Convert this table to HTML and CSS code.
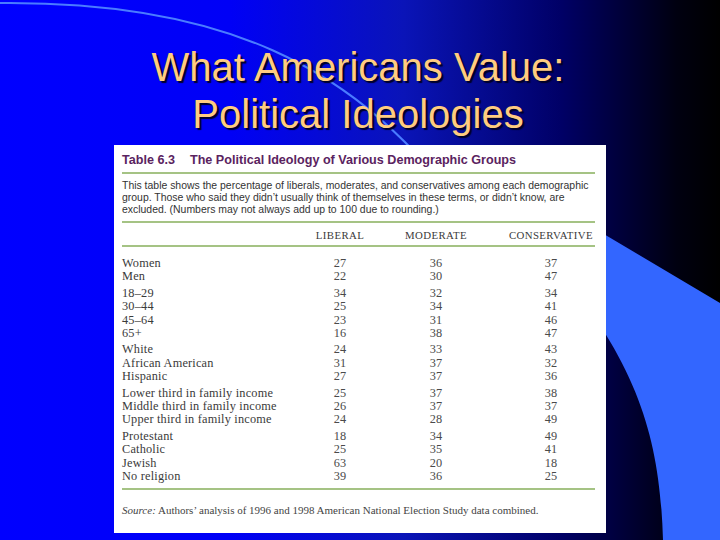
FILE: index.html
```html
<!DOCTYPE html>
<html>
<head>
<meta charset="utf-8">
<link rel="stylesheet" href="styles.css">
</head>
<body>
<div class="slide">
  <svg class="deco" width="720" height="540" viewBox="0 0 720 540" aria-hidden="true">
    <path d="M0 3 C210 1 360 58 470 222" fill="none" stroke="#4a7cff" stroke-width="2"/>
    <path d="M560 208 L720 303 L720 540 L663 540 C660 440 640 370 560 270 Z" fill="#3366ff"/>
  </svg>
  <h1 class="title">What Americans Value:<br>Political Ideologies</h1>
  <div class="card">
    <div class="caption"><span class="num">Table 6.3</span><span>The Political Ideology of Various Demographic Groups</span></div>
    <div class="rule"></div>
    <p class="intro">This table shows the percentage of liberals, moderates, and conservatives among each demographic group. Those who said they didn’t usually think of themselves in these terms, or didn’t know, are excluded. (Numbers may not always add up to 100 due to rounding.)</p>
    <div class="rule"></div>
    <div class="row head"><span></span><span>LIBERAL</span><span>MODERATE</span><span>CONSERVATIVE</span></div>
    <div class="rule"></div>
    <div class="body">
      <div class="group">
        <div class="row"><span>Women</span><span>27</span><span>36</span><span>37</span></div>
        <div class="row"><span>Men</span><span>22</span><span>30</span><span>47</span></div>
      </div>
      <div class="group">
        <div class="row"><span>18–29</span><span>34</span><span>32</span><span>34</span></div>
        <div class="row"><span>30–44</span><span>25</span><span>34</span><span>41</span></div>
        <div class="row"><span>45–64</span><span>23</span><span>31</span><span>46</span></div>
        <div class="row"><span>65+</span><span>16</span><span>38</span><span>47</span></div>
      </div>
      <div class="group">
        <div class="row"><span>White</span><span>24</span><span>33</span><span>43</span></div>
        <div class="row"><span>African American</span><span>31</span><span>37</span><span>32</span></div>
        <div class="row"><span>Hispanic</span><span>27</span><span>37</span><span>36</span></div>
      </div>
      <div class="group">
        <div class="row"><span>Lower third in family income</span><span>25</span><span>37</span><span>38</span></div>
        <div class="row"><span>Middle third in family income</span><span>26</span><span>37</span><span>37</span></div>
        <div class="row"><span>Upper third in family income</span><span>24</span><span>28</span><span>49</span></div>
      </div>
      <div class="group">
        <div class="row"><span>Protestant</span><span>18</span><span>34</span><span>49</span></div>
        <div class="row"><span>Catholic</span><span>25</span><span>35</span><span>41</span></div>
        <div class="row"><span>Jewish</span><span>63</span><span>20</span><span>18</span></div>
        <div class="row"><span>No religion</span><span>39</span><span>36</span><span>25</span></div>
      </div>
    </div>
    <div class="rule"></div>
    <p class="source"><em>Source:</em> Authors’ analysis of 1996 and 1998 American National Election Study data combined.</p>
  </div>
</div>
</body>
</html>
```
FILE: styles.css
```css
html, body {
  margin: 0;
  padding: 0;
}
body {
  width: 720px;
  height: 540px;
  overflow: hidden;
}
.slide {
  position: relative;
  width: 720px;
  height: 540px;
  background: linear-gradient(to right, #0000ff 0%, #0000f6 32%, #0a14b8 56%, #000066 78%, #000010 94%, #000000 100%);
  display: flex;
  flex-direction: column;
  align-items: center;
}
.deco {
  position: absolute;
  left: 0;
  top: 0;
}
.title {
  position: relative;
  margin: 44px 0 0 -4px;
  font-family: "Liberation Sans", Arial, sans-serif;
  font-weight: normal;
  font-size: 40px;
  line-height: 47px;
  color: #ffcc80;
  text-align: center;
  text-shadow: 2px 2px 1px #00002a;
}
.card {
  position: relative;
  margin: 7px 0 0 0;
  width: 492px;
  height: 388px;
  box-sizing: border-box;
  background: #ffffff;
  padding: 6px 11px 0 8px;
  display: flex;
  flex-direction: column;
}
.caption {
  font-family: "Liberation Sans", Arial, sans-serif;
  font-weight: bold;
  font-size: 12.6px;
  line-height: 18px;
  color: #5a2360;
  display: flex;
  gap: 15px;
}
.rule {
  height: 2px;
  background: #a5c384;
}
.caption + .rule {
  margin-top: 3px;
}
.intro {
  margin: 6px 0 5px 0;
  font-family: "Liberation Sans", Arial, sans-serif;
  font-size: 10.45px;
  line-height: 12px;
  color: #333333;
}
.row {
  display: grid;
  grid-template-columns: 190px 56px 136px 94px;
  font-family: "Liberation Serif", "Times New Roman", serif;
  font-size: 12.3px;
  line-height: 13.4px;
  letter-spacing: 0.2px;
  color: #3a3a3a;
}
.row span + span {
  text-align: center;
  color: #4a4a4a;
}
.row.head {
  font-size: 10.8px;
  letter-spacing: 0.4px;
  line-height: 12px;
  color: #444444;
  padding: 6px 0 4px 0;
}
.row.head span + span {
  color: #3a3a3a;
}
.body {
  padding: 10px 0 4px 0;
  display: flex;
  flex-direction: column;
  gap: 3px;
}
.source {
  margin: 14px 0 0 0;
  font-family: "Liberation Serif", "Times New Roman", serif;
  font-size: 11px;
  line-height: 12px;
  color: #444444;
}
```
